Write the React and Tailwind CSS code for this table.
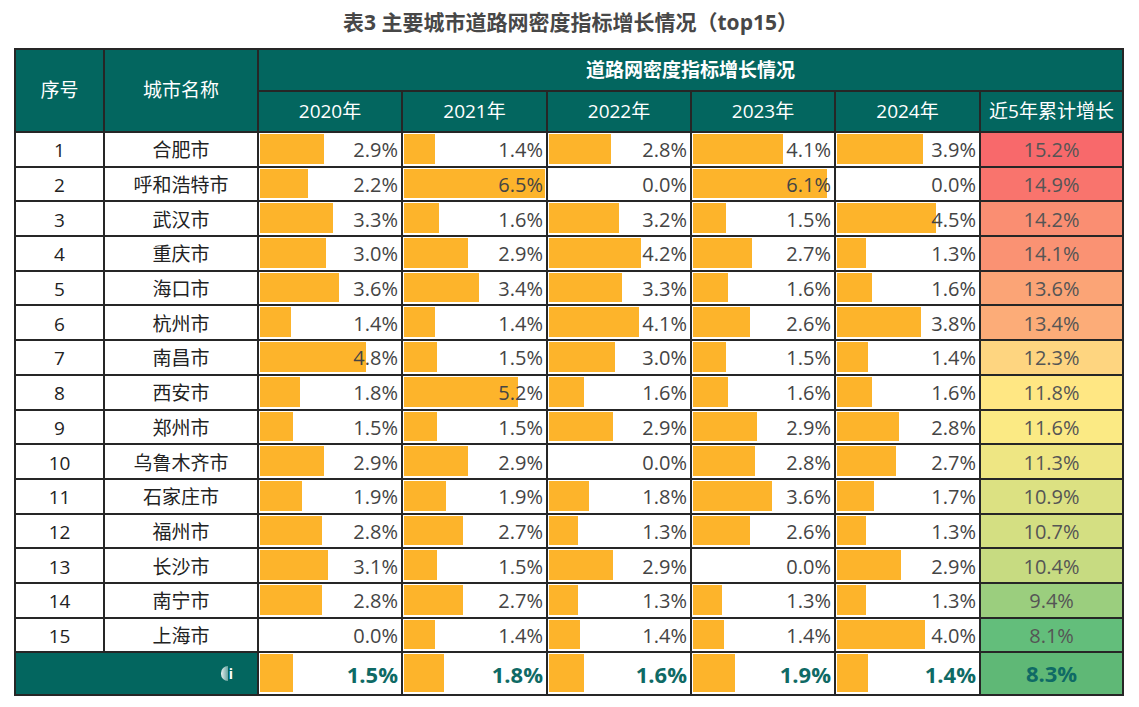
import React from "react";

const rows = [
  [1, "合肥市", [2.9, 1.4, 2.8, 4.1, 3.9], 15.2],
  [2, "呼和浩特市", [2.2, 6.5, 0.0, 6.1, 0.0], 14.9],
  [3, "武汉市", [3.3, 1.6, 3.2, 1.5, 4.5], 14.2],
  [4, "重庆市", [3.0, 2.9, 4.2, 2.7, 1.3], 14.1],
  [5, "海口市", [3.6, 3.4, 3.3, 1.6, 1.6], 13.6],
  [6, "杭州市", [1.4, 1.4, 4.1, 2.6, 3.8], 13.4],
  [7, "南昌市", [4.8, 1.5, 3.0, 1.5, 1.4], 12.3],
  [8, "西安市", [1.8, 5.2, 1.6, 1.6, 1.6], 11.8],
  [9, "郑州市", [1.5, 1.5, 2.9, 2.9, 2.8], 11.6],
  [10, "乌鲁木齐市", [2.9, 2.9, 0.0, 2.8, 2.7], 11.3],
  [11, "石家庄市", [1.9, 1.9, 1.8, 3.6, 1.7], 10.9],
  [12, "福州市", [2.8, 2.7, 1.3, 2.6, 1.3], 10.7],
  [13, "长沙市", [3.1, 1.5, 2.9, 0.0, 2.9], 10.4],
  [14, "南宁市", [2.8, 2.7, 1.3, 1.3, 1.3], 9.4],
  [15, "上海市", [0.0, 1.4, 1.4, 1.4, 4.0], 8.1],
];

const totals = [1.5, 1.8, 1.6, 1.9, 1.4];
const years = ["2020年", "2021年", "2022年", "2023年", "2024年"];

// excel style 3-colour scale: green (min) -> yellow (mid) -> red (max)
const mix = (a, b, t) => a.map((v, i) => Math.round(v + (b[i] - v) * t));
const scaleColor = (v) => {
  const min = 8.1, mid = 11.7, max = 15.2;
  const g = [99, 190, 123], y = [255, 235, 132], r = [248, 105, 107];
  const c = v <= mid ? mix(g, y, Math.max(0, (v - min) / (mid - min))) : mix(y, r, (v - mid) / (max - mid));
  return `rgb(${c[0]},${c[1]},${c[2]})`;
};

const font = { fontFamily: '"Open Sans", "Noto Sans CJK SC", sans-serif' };

const BarCell = ({ v, bold }) => (
  <td className="border-2 border-[#262626] p-0 relative">
    <div
      className="absolute left-[1px] top-[1px] bottom-[2px] bg-[#fdb42b]"
      style={{ width: Math.min(v * 22, 141) }}
    />
    <div
      className={
        bold
          ? "relative text-right pr-[3px] text-[22px] font-bold text-[#0f6a65] leading-[28px]"
          : "relative text-right pr-[3px] text-[20px] text-[#444] leading-[26px] pt-[2px]"
      }
    >
      {v.toFixed(1)}%
    </div>
  </td>
);

export default function App() {
  return (
    <div className="w-[1139px] h-[707px] bg-white" style={font}>
      <div className="pt-[8px] h-[48px] text-center text-[21px] font-bold text-[#474747] leading-[28px] pl-[2px]">
        表3 主要城市道路网密度指标增长情况（top15）
      </div>
      <div className="pl-[14px]">
        <table className="table-fixed border-collapse border-2 border-[#262626] w-[1108px]">
          <colgroup>
            <col className="w-[89px]" />
            <col className="w-[154px]" />
            <col className="w-[144px]" />
            <col className="w-[145px]" />
            <col className="w-[144px]" />
            <col className="w-[144px]" />
            <col className="w-[145px]" />
            <col className="w-[143px]" />
          </colgroup>
          <thead>
            <tr className="h-[42px] bg-[#03665f] text-white">
              <th rowSpan={2} className="border-2 border-[#262626] font-normal text-[19px]">序号</th>
              <th rowSpan={2} className="border-2 border-[#262626] font-normal text-[19px]">城市名称</th>
              <th colSpan={6} className="border-2 border-[#262626] font-bold text-[19px]">道路网密度指标增长情况</th>
            </tr>
            <tr className="h-[41px] bg-[#03665f] text-white">
              {years.map((y) => (
                <th key={y} className="border-2 border-[#262626] font-normal text-[19px]">{y}</th>
              ))}
              <th className="border-2 border-[#262626] font-normal text-[19px]">近5年累计增长</th>
            </tr>
          </thead>
          <tbody>
            {rows.map(([n, city, vals, total]) => (
              <tr key={n} className="h-[34.7px] leading-[26px]">
                <td className="border-2 border-[#262626] text-center text-[19px] text-[#222] pt-[2px]">{n}</td>
                <td className="border-2 border-[#262626] text-center text-[19px] text-[#222] pt-[2px]">{city}</td>
                {vals.map((v, i) => (
                  <BarCell key={i} v={v} />
                ))}
                <td
                  className="border-2 border-[#262626] text-center text-[20px] text-[#555] pt-[2px]"
                  style={{ background: scaleColor(total) }}
                >
                  {total.toFixed(1)}%
                </td>
              </tr>
            ))}
            <tr className="h-[43px]">
              <td colSpan={2} className="border-2 border-[#262626] bg-[#03665f]">
                <div className="flex justify-end items-center pr-[24px]">
                  <div className="w-[7px] h-[15px] rounded-l-full bg-gradient-to-r from-white/90 to-white/40" />
                  <span className="text-white text-[14px] font-bold leading-none ml-[1px]">i</span>
                </div>
              </td>
              {totals.map((v, i) => (
                <BarCell key={i} v={v} bold />
              ))}
              <td
                className="border-2 border-[#262626] text-center text-[22px] font-bold text-[#0f6a65]"
                style={{ background: "#5fb876" }}
              >
                8.3%
              </td>
            </tr>
          </tbody>
        </table>
      </div>
    </div>
  );
}
